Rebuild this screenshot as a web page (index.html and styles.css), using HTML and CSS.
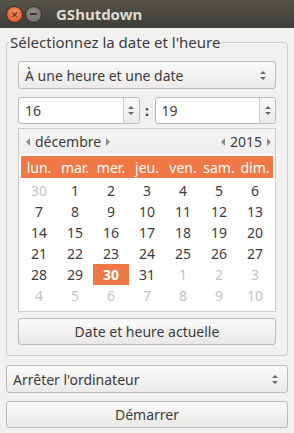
FILE: index.html
```html
<!DOCTYPE html>
<html lang="fr">
<head>
    <meta charset="UTF-8">
    <meta name="viewport" content="width=device-width, initial-scale=1.0">
    <title>GShutdown</title>
    <link rel="stylesheet" href="styles.css">
</head>
<body>
    <div class="titlebar">
        <span class="win-btn close-btn">&#x2715;</span>
        <span class="win-btn min-btn"><span class="min-bar"></span></span>
        <span class="title">GShutdown</span>
    </div>

    <div class="content">
        <fieldset class="frame">
            <legend>Sélectionnez la date et l'heure</legend>

            <div class="combo">
                <span>À une heure et une date</span>
                <span class="combo-arrows"><span class="up"></span><span class="down"></span></span>
            </div>

            <div class="time-row">
                <div class="spin">
                    <span class="spin-value">16</span>
                    <span class="spin-btns"><span class="up"></span><span class="down"></span></span>
                </div>
                <span class="colon">:</span>
                <div class="spin">
                    <span class="spin-value">19</span>
                    <span class="spin-btns"><span class="up"></span><span class="down"></span></span>
                </div>
            </div>

            <div class="calendar">
                <div class="cal-header">
                    <div class="cal-nav">
                        <span class="arrow-left"></span>
                        <span class="month">décembre</span>
                        <span class="arrow-right"></span>
                    </div>
                    <div class="cal-nav">
                        <span class="arrow-left"></span>
                        <span class="year">2015</span>
                        <span class="arrow-right"></span>
                    </div>
                </div>
                <div class="weekdays">
                    <span>lun.</span><span>mar.</span><span>mer.</span><span>jeu.</span><span>ven.</span><span>sam.</span><span>dim.</span>
                </div>
                <div class="days" id="days"></div>
            </div>

            <button class="btn">Date et heure actuelle</button>
        </fieldset>

        <div class="combo wide">
            <span>Arrêter l'ordinateur</span>
            <span class="combo-arrows"><span class="up"></span><span class="down"></span></span>
        </div>

        <button class="btn wide">Démarrer</button>
    </div>

    <script>
        const daysEl = document.getElementById('days');
        const cells = [];
        cells.push({ n: 30, other: true });
        for (let d = 1; d <= 31; d++) cells.push({ n: d });
        for (let d = 1; d <= 10; d++) cells.push({ n: d, other: true });

        cells.forEach(c => {
            const span = document.createElement('span');
            span.textContent = c.n;
            if (c.other) span.className = 'other';
            if (!c.other && c.n === 30) span.className = 'selected';
            daysEl.appendChild(span);
        });
    </script>
</body>
</html>
```

FILE: styles.css
```css
body {
    margin: 0;
    font-family: "Noto Sans", "DejaVu Sans", sans-serif;
    font-size: 14px;
    color: #3c3c3c;
    background-color: #f2f1f0;
}
.titlebar {
    height: 28px;
    display: flex;
    align-items: center;
    padding-left: 6px;
    background: linear-gradient(#545249, #3f3e39);
}
.win-btn {
    width: 17px;
    height: 17px;
    border-radius: 50%;
    margin-right: 2px;
    display: flex;
    align-items: center;
    justify-content: center;
    box-sizing: border-box;
}
.close-btn {
    background: radial-gradient(circle at 50% 35%, #f58a62, #e1501f);
    border: 1px solid #3a2a22;
    color: #3b2a22;
    font-size: 9px;
    font-weight: bold;
}
.min-btn {
    background: radial-gradient(circle at 50% 35%, #8f8c85, #6b6963);
    border: 1px solid #2f2e2a;
}
.min-bar {
    width: 7px;
    height: 2px;
    background-color: #3a3935;
}
.title {
    margin-left: 12px;
    color: #dfdbd2;
    font-weight: bold;
    font-size: 15px;
}
.content {
    padding: 0 6px;
}
.frame {
    margin: 5px 0 0 0;
    border: 1px solid #cdcbc7;
    border-radius: 4px;
    padding: 0 11px 10px 11px;
}
.frame legend {
    margin-left: -9px;
    padding: 0 1px;
    line-height: 18px;
    font-size: 15px;
}
.combo {
    margin-top: 10px;
    height: 28px;
    box-sizing: border-box;
    border: 1px solid #bdbab5;
    border-radius: 3px;
    background: linear-gradient(#fbfbfa, #ebeae8);
    display: flex;
    align-items: center;
    justify-content: space-between;
    padding: 0 9px 0 6px;
}
.combo-arrows, .spin-btns {
    display: flex;
    flex-direction: column;
    align-items: center;
    gap: 3px;
}
.up {
    width: 0;
    height: 0;
    border-left: 3px solid transparent;
    border-right: 3px solid transparent;
    border-bottom: 3px solid #6a6a6a;
}
.down {
    width: 0;
    height: 0;
    border-left: 3px solid transparent;
    border-right: 3px solid transparent;
    border-top: 3px solid #6a6a6a;
}
.time-row {
    display: flex;
    align-items: center;
    margin-top: 8px;
}
.spin {
    flex: 1;
    height: 27px;
    box-sizing: border-box;
    border: 1px solid #bdbab5;
    border-radius: 3px;
    background-color: #fff;
    display: flex;
    align-items: stretch;
}
.spin-value {
    flex: 1;
    display: flex;
    align-items: center;
    padding-left: 6px;
}
.spin-btns {
    width: 15px;
    justify-content: center;
    border-left: 1px solid #d0cec9;
    background: linear-gradient(#fbfbfa, #ebeae8);
    border-radius: 0 3px 3px 0;
}
.colon {
    width: 15px;
    text-align: center;
    font-weight: bold;
}
.calendar {
    margin-top: 4px;
    border: 1px solid #cdcbc7;
    background-color: #fff;
    padding: 0 2px 5px 2px;
}
.cal-header {
    height: 25px;
    margin: 0 -2px;
    padding: 0 4px 0 7px;
    background: linear-gradient(#f7f6f5, #efeeec);
    display: flex;
    align-items: center;
    justify-content: space-between;
}
.cal-nav {
    display: flex;
    align-items: center;
    gap: 5px;
}
.arrow-left {
    width: 0;
    height: 0;
    border-top: 4px solid transparent;
    border-bottom: 4px solid transparent;
    border-right: 4px solid #8a8a8a;
}
.arrow-right {
    width: 0;
    height: 0;
    border-top: 4px solid transparent;
    border-bottom: 4px solid transparent;
    border-left: 4px solid #8a8a8a;
}
.weekdays {
    margin-top: 2px;
    height: 22px;
    background-color: #f07746;
    color: #fff;
    display: grid;
    grid-template-columns: repeat(7, 36px);
    align-items: center;
    text-align: center;
}
.days {
    margin-top: 2px;
    display: grid;
    grid-template-columns: repeat(7, 36px);
    grid-auto-rows: 21px;
    text-align: center;
    line-height: 21px;
}
.days .other {
    color: #c4c4c4;
}
.days .selected {
    background-color: #f07746;
    color: #fff;
    font-weight: bold;
}
.btn {
    display: block;
    width: 100%;
    margin-top: 6px;
    height: 27px;
    border: 1px solid #bdbab5;
    border-radius: 3px;
    background: linear-gradient(#fbfbfa, #e9e8e6);
    font-family: inherit;
    font-size: 14px;
    color: #3c3c3c;
}
.combo.wide {
    margin-top: 9px;
}
.btn.wide {
    margin-top: 8px;
}
```
